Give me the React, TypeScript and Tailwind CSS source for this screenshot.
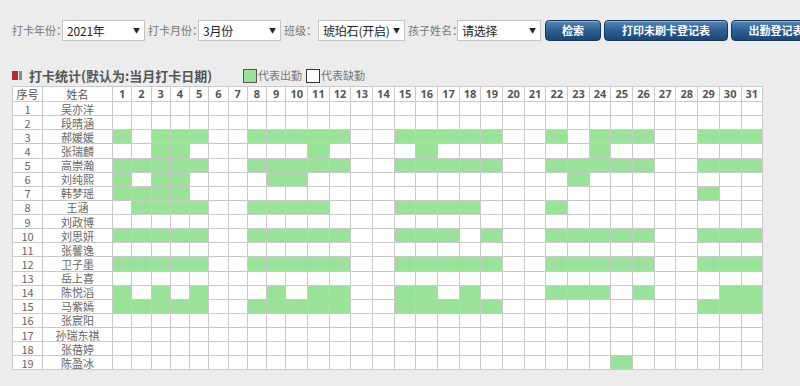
import type { ReactNode } from "react";

const range = (a: number, b: number) =>
  Array.from({ length: b - a + 1 }, (_, i) => a + i);

const days = range(1, 31);

const students: { name: string; present: number[] }[] = [
  { name: "吴亦洋", present: [] },
  { name: "段晴涵", present: [] },
  { name: "郝媛媛", present: [1, 3, 4, 5, ...range(8, 12), ...range(15, 19), 22, 24, 25, 26, 29, 30, 31] },
  { name: "张瑞麟", present: [3, 4, 11, 16, 24] },
  { name: "高崇瀚", present: [...range(1, 5), ...range(8, 12), ...range(15, 19), ...range(22, 26), 29, 30, 31] },
  { name: "刘纯熙", present: [1, 3, 4, 9, 10, 23] },
  { name: "韩梦瑶", present: [1, 2, 3, 4, 29] },
  { name: "王涵", present: [2, 3, 4, 5, 8, 9, 10, 11, 15, 16, 17, 18, 22] },
  { name: "刘政博", present: [] },
  { name: "刘思妍", present: [...range(1, 5), ...range(8, 12), 15, 16, 17, 19, ...range(22, 26), 29, 30, 31] },
  { name: "张馨逸", present: [] },
  { name: "卫子墨", present: [...range(1, 5), ...range(8, 12), ...range(15, 19), ...range(22, 26), 29, 30, 31] },
  { name: "岳上喜", present: [] },
  { name: "陈悦滔", present: [1, 3, 5, 9, 11, 12, 15, 16, 18, 22, 23, 24, 26, 30, 31] },
  { name: "马紫嫣", present: [...range(1, 5), ...range(8, 12), ...range(15, 19), 29, 30, 31] },
  { name: "张宸阳", present: [] },
  { name: "孙瑞东祺", present: [] },
  { name: "张蓓婷", present: [] },
  { name: "陈盈冰", present: [25] },
];

const font = "font-['Microsoft_YaHei','Noto_Sans_CJK_SC',sans-serif]";

function Label({ children, className }: { children: ReactNode; className: string }) {
  return (
    <span className={`shrink-0 whitespace-nowrap text-[11px] text-[#777] ${className}`}>
      {children}
    </span>
  );
}

function FakeSelect({ value, className }: { value: string; className: string }) {
  return (
    <div
      className={`flex h-[21px] shrink-0 items-center justify-between border border-[#c4c4c4] bg-white pr-[4px] pl-[4px] text-[12px] text-[#222] ${className}`}
    >
      <span className="whitespace-nowrap tracking-[-0.2px]">{value}</span>
      <span className="text-[7px] text-[#222]">▼</span>
    </div>
  );
}

function BlueButton({ children, className }: { children: ReactNode; className: string }) {
  return (
    <button
      type="button"
      className={`flex h-[21px] shrink-0 items-center justify-center rounded-[4px] border border-[#17375c] bg-gradient-to-b from-[#5287bb] via-[#2e5f92] to-[#1c4777] text-[11px] font-bold whitespace-nowrap text-white shadow-[inset_0_1px_0_rgba(255,255,255,0.35)] ${className}`}
    >
      {children}
    </button>
  );
}

export default function App() {
  return (
    <div className={`h-[386px] w-[800px] overflow-hidden bg-[#ececec] ${font}`}>
      {/* Filter bar */}
      <div className="flex items-center pt-[20px] pl-[12px]">
        <Label className="w-[50px]">打卡年份：</Label>
        <FakeSelect value="2021年" className="w-[83px]" />
        <Label className="w-[53px] pl-[3px]">打卡月份：</Label>
        <FakeSelect value="3月份" className="w-[83px]" />
        <Label className="w-[37px] pl-[3px]">班级：</Label>
        <FakeSelect value="琥珀石(开启)" className="w-[87px]" />
        <Label className="w-[52px] pl-[3px]">孩子姓名：</Label>
        <FakeSelect value="请选择" className="w-[84px]" />
        <div className="ml-[4px] flex gap-[3px]">
          <BlueButton className="w-[56px]">检索</BlueButton>
          <BlueButton className="w-[124px]">打印未刷卡登记表</BlueButton>
          <BlueButton className="w-[90px]">出勤登记表</BlueButton>
        </div>
      </div>

      {/* Title + legend */}
      <div className="mt-[24px] flex h-[21px] items-center pl-[12px]">
        <span className="h-[9px] w-[6px] bg-[#c0262c]" />
        <span className="ml-[1px] h-[9px] w-[3px] bg-[#8a8a8a]" />
        <span className="ml-[7px] text-[13px] leading-none font-bold text-[#555]">
          打卡统计(默认为:当月打卡日期)
        </span>
        <span className="ml-[31px] h-[14px] w-[14px] border border-[#555] bg-[#98e398]" />
        <span className="ml-[1px] text-[11px] leading-none text-[#777]">代表出勤</span>
        <span className="ml-[4px] h-[14px] w-[14px] border border-[#333] bg-white" />
        <span className="ml-[1px] text-[11px] leading-none text-[#777]">代表缺勤</span>
      </div>

      {/* Attendance table */}
      <div className="pl-[12px]">
        <table className="w-[751px] table-fixed border-collapse bg-white text-[11px] leading-[12px] text-[#666]">
          <colgroup>
            <col className="w-[30px]" />
            <col className="w-[70px]" />
            {days.map((d) => (
              <col key={d} className={d < 10 ? "w-[19.27px]" : "w-[21.68px]"} />
            ))}
          </colgroup>
          <thead>
            <tr>
              <th className="h-[15px] border border-[#c9c9c9] p-0 font-normal text-[#555]">序号</th>
              <th className="h-[15px] border border-[#c9c9c9] p-0 font-normal text-[#555]">姓名</th>
              {days.map((d) => (
                <th
                  key={d}
                  className="h-[15px] border border-[#c9c9c9] p-0 font-['Open_Sans',sans-serif] text-[11px] font-bold text-[#555]"
                >
                  {d}
                </th>
              ))}
            </tr>
          </thead>
          <tbody>
            {students.map((s, i) => (
              <tr key={s.name}>
                <td className="h-[14.14px] border border-[#c9c9c9] p-0 text-center">{i + 1}</td>
                <td className="h-[14.14px] border border-[#c9c9c9] p-0 text-center whitespace-nowrap">
                  {s.name}
                </td>
                {days.map((d) => (
                  <td
                    key={d}
                    className={`h-[14.14px] border border-[#c9c9c9] p-0 ${
                      s.present.includes(d) ? "bg-[#98e398]" : ""
                    }`}
                  />
                ))}
              </tr>
            ))}
          </tbody>
        </table>
      </div>
    </div>
  );
}
